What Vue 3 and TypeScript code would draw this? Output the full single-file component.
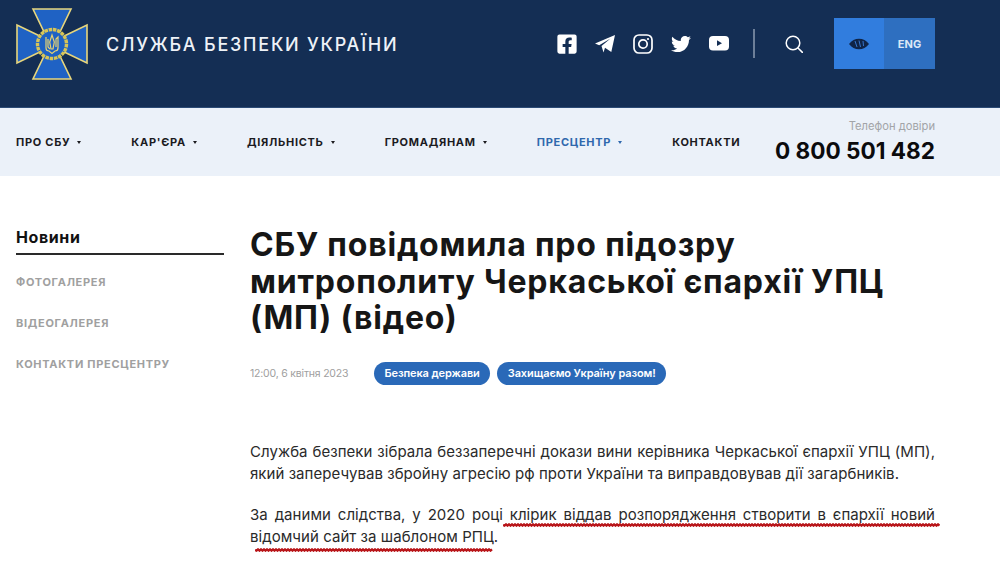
<script setup lang="ts">
import { computed } from 'vue'

interface NavItem {
  label: string
  arrow: boolean
  active?: boolean
}

const navItems: NavItem[] = [
  { label: 'Про СБУ', arrow: true },
  { label: "Кар'єра", arrow: true },
  { label: 'Діяльність', arrow: true },
  { label: 'Громадянам', arrow: true },
  { label: 'Пресцентр', arrow: true, active: true },
  { label: 'Контакти', arrow: false }
]

const sideLinks = ['Фотогалерея', 'Відеогалерея', 'Контакти пресцентру']
const tags = ['Безпека держави', 'Захищаємо Україну разом!']

/** хвиляста лінія для підкреслення */
function wave(width: number): string {
  let d = 'M0 2'
  for (let x = 1.5; x <= width; x += 1.5) {
    d += ` L${x} ${Math.round(x / 1.5) % 2 === 0 ? 1.4 : 2.6}`
  }
  return d
}

const waveLong = computed(() => wave(437))
const waveShort = computed(() => wave(238))
</script>

<template>
  <div class="page">
    <header class="top">
      <div class="brand">
        <svg class="emblem" viewBox="0 0 72 72" width="72" height="72">
          <g fill="#1f62c4" stroke="#e8d67c" stroke-width="1.6" stroke-linejoin="miter">
            <path d="M17 1 H55 L42 28 H30 Z" />
            <path d="M17 71 H55 L42 44 H30 Z" />
            <path d="M1 17 V55 L28 42 V30 Z" />
            <path d="M71 17 V55 L44 42 V30 Z" />
          </g>
          <circle cx="36" cy="36" r="14.5" fill="#1f62c4" stroke="#d8c556" stroke-width="3.4" stroke-dasharray="3.5 0.8" />
          <g fill="none" stroke="#e6d272" stroke-width="1.2">
            <path d="M36 27 L38.3 34 L37 41 H35 L33.7 34 Z" />
            <path d="M30 29 V40 Q30 43 33 43 L36 45.5 L39 43 Q42 43 42 40 V29 L40 31 V39" />
            <path d="M32 31 V39 L34 41" />
          </g>
        </svg>
        <span class="brand-name">Служба безпеки України</span>
      </div>
      <div class="top-right">
        <div class="socials">
          <svg viewBox="0 0 448 512" width="20" height="22" fill="#fff"><path d="M400 32H48A48 48 0 0 0 0 80v352a48 48 0 0 0 48 48h137.25V327.69h-63V256h63v-54.64c0-62.15 37-96.48 93.67-96.48 27.14 0 55.52 4.84 55.52 4.84v61h-31.27c-30.81 0-40.42 19.12-40.42 38.73V256h68.78l-11 71.69h-57.78V480H400a48 48 0 0 0 48-48V80a48 48 0 0 0-48-48z" /></svg>
          <svg viewBox="0 0 20 18" width="20" height="18" fill="#fff"><path d="M0 8.5 L20 0 L16.3 17 L10 12.8 L8.5 17.5 L6.5 11 L15.5 3.6 L4.2 10.3 Z" /></svg>
          <svg viewBox="0 0 20 20" width="20" height="20" fill="none" stroke="#fff" stroke-width="1.7"><rect x="1" y="1" width="18" height="18" rx="5" /><circle cx="10" cy="10" r="4.2" /><circle cx="15" cy="5" r="1.1" fill="#fff" stroke="none" /></svg>
          <svg viewBox="0 0 512 512" width="20" height="20" fill="#fff"><path d="M459.37 151.716c.325 4.548.325 9.097.325 13.645 0 138.72-105.583 298.558-298.558 298.558-59.452 0-114.68-17.219-161.137-47.106 8.447.974 16.568 1.299 25.34 1.299 49.055 0 94.213-16.568 130.274-44.832-46.132-.975-84.792-31.188-98.112-72.772 6.498.974 12.995 1.624 19.818 1.624 9.421 0 18.843-1.3 27.614-3.573-48.081-9.747-84.143-51.98-84.143-102.985v-1.299c13.969 7.797 30.214 12.67 47.431 13.319-28.264-18.843-46.781-51.005-46.781-87.391 0-19.492 5.197-37.36 14.294-52.954 51.655 63.675 129.3 105.258 216.365 109.807-1.624-7.797-2.599-15.918-2.599-24.04 0-57.828 46.782-104.934 104.934-104.934 30.213 0 57.502 12.67 76.67 33.137 23.715-4.548 46.456-13.32 66.599-25.34-7.798 24.366-24.366 44.833-46.132 57.827 21.117-2.273 41.584-8.122 60.426-16.243-14.292 20.791-32.161 39.308-52.628 54.253z" /></svg>
          <svg viewBox="0 0 20 15" width="20" height="15"><rect width="20" height="14.5" rx="4" fill="#fff" /><path d="M8 4.3 L13 7.2 L8 10.1 Z" fill="#142e54" /></svg>
        </div>
        <span class="divider"></span>
        <svg class="search" viewBox="0 0 18 18" width="18" height="18" fill="none" stroke="#fff" stroke-width="1.5"><circle cx="8" cy="8" r="6.8" /><path d="M13 13 L17.4 17.4" stroke-linecap="round" /></svg>
        <div class="access">
          <span class="access-eye">
            <svg viewBox="0 0 20 12" width="20" height="12">
              <path d="M0 6 C5 -1 15 -1 20 6 C15 13 5 13 0 6 Z" fill="#0f2447" />
              <path d="M6 3 L8 9 M10 2.5 L11.5 9 M14 3 L14.5 8" stroke="#3a7edb" stroke-width="0.9" />
            </svg>
          </span>
          <span class="access-lang">ENG</span>
        </div>
      </div>
    </header>

    <nav class="nav">
      <div class="nav-list">
        <a v-for="item in navItems" :key="item.label" class="nav-item" :class="{ active: item.active }">
          {{ item.label }}
          <i v-if="item.arrow" class="nav-arrow"></i>
        </a>
      </div>
      <div class="phone">
        <span class="phone-label">Телефон довіри</span>
        <span class="phone-number">0 800 501 482</span>
      </div>
    </nav>

    <main class="content">
      <aside class="side">
        <div class="side-title">Новини</div>
        <a v-for="link in sideLinks" :key="link" class="side-link">{{ link }}</a>
      </aside>
      <article class="article">
        <h1 class="title">СБУ повідомила про підозру митрополиту Черкаської єпархії УПЦ (МП) (відео)</h1>
        <div class="meta">
          <span class="date">12:00, 6 квітня 2023</span>
          <span v-for="tag in tags" :key="tag" class="tag">{{ tag }}</span>
        </div>
        <p class="para">Служба безпеки зібрала беззаперечні докази вини керівника Черкаської єпархії УПЦ (МП), який заперечував збройну агресію рф проти України та виправдовував дії загарбників.</p>
        <p class="para marked">
          За даними слідства, у 2020 році клірик віддав розпорядження створити в єпархії новий відомчий сайт за шаблоном РПЦ.
          <svg class="mark mark-long" width="437" height="4"><path :d="waveLong" /></svg>
          <svg class="mark mark-short" width="238" height="4"><path :d="waveShort" /></svg>
        </p>
      </article>
    </main>
  </div>
</template>

<style>
html,
body {
  margin: 0;
  background: #fff;
}
</style>

<style scoped>
.page {
  width: 1000px;
  height: 567px;
  overflow: hidden;
  font-family: Inter, "Noto Sans", sans-serif;
  color: #111;
}

.top {
  height: 108px;
  box-sizing: border-box;
  padding: 8px 65px 0 16px;
  background: #142e54;
  border-bottom: 1px solid #2c4b76;
  display: flex;
  justify-content: space-between;
  align-items: flex-start;
}

.brand {
  display: flex;
  align-items: center;
  gap: 18px;
}

.emblem {
  display: block;
}

.brand-name {
  font-size: 18px;
  font-weight: 500;
  letter-spacing: 1.78px;
  text-transform: uppercase;
  color: #eef2f7;
}

.top-right {
  display: flex;
  align-items: center;
  margin-top: 10px;
  height: 51px;
}

.socials {
  display: flex;
  align-items: center;
  gap: 18px;
}

.divider {
  width: 2px;
  height: 29px;
  margin-left: 24px;
  background: #6d7f99;
}

.search {
  margin-left: 30px;
}

.access {
  display: flex;
  margin-left: 31px;
  height: 51px;
}

.access-eye,
.access-lang {
  width: 51px;
  display: flex;
  align-items: center;
  justify-content: center;
}

.access-eye {
  width: 50px;
  background: #317dde;
}

.access-lang {
  background: #2e6fc0;
  color: #dbe7f6;
  font-size: 11px;
  font-weight: 700;
}

.nav {
  height: 68px;
  box-sizing: border-box;
  padding: 0 65px 0 16px;
  background: #ebf1f9;
  display: flex;
  align-items: center;
  justify-content: space-between;
}

.nav-list {
  display: flex;
  align-items: center;
  gap: 50px;
}

.nav-item {
  display: flex;
  align-items: center;
  gap: 7px;
  flex: none;
  white-space: nowrap;
  font-size: 11px;
  font-weight: 700;
  letter-spacing: 0.72px;
  text-transform: uppercase;
  color: #1b1b1f;
}

.nav-item.active {
  color: #2f68ad;
}

.nav-arrow {
  width: 0;
  height: 0;
  border-left: 2.5px solid transparent;
  border-right: 2.5px solid transparent;
  border-top: 3px solid currentColor;
}

.phone {
  display: flex;
  flex-direction: column;
  align-items: flex-end;
  gap: 4px;
  padding-bottom: 2px;
  white-space: nowrap;
}

.phone-label {
  font-size: 11.2px;
  line-height: 14px;
  color: #a2a4a8;
}

.phone-number {
  font-size: 22.6px;
  line-height: 27px;
  font-weight: 700;
  color: #0b0b0d;
}

.content {
  display: flex;
  gap: 26px;
  padding: 0 65px 0 16px;
}

.side {
  width: 208px;
  flex: none;
  padding-top: 52px;
  display: flex;
  flex-direction: column;
}

.side-title {
  font-size: 16px;
  font-weight: 700;
  letter-spacing: 0.6px;
  line-height: 18px;
  padding-bottom: 7px;
  border-bottom: 2px solid #2a2a2a;
  margin-bottom: 20px;
}

.side-link {
  font-size: 11px;
  font-weight: 700;
  line-height: 14px;
  letter-spacing: 0.7px;
  text-transform: uppercase;
  color: #a0a0a0;
  margin-bottom: 27px;
}

.article {
  flex: 1;
  padding-top: 51px;
}

.title {
  margin: 0;
  max-width: 650px;
  font-size: 32px;
  font-weight: 700;
  letter-spacing: 0.8px;
  line-height: 36.5px;
  color: #161616;
}

.meta {
  display: flex;
  align-items: center;
  margin-top: 25px;
}

.date {
  font-size: 10.5px;
  letter-spacing: -0.2px;
  color: #a0a0a0;
  width: 124px;
}

.tag {
  height: 23px;
  line-height: 23px;
  padding: 0 10.5px;
  margin-right: 7px;
  border-radius: 12px;
  background: #2a69b8;
  color: #fff;
  font-size: 11px;
  font-weight: 600;
  letter-spacing: -0.1px;
}

.para {
  margin: 0 0 18px;
  font-size: 15px;
  line-height: 22.5px;
  text-align: justify;
  letter-spacing: 0.05px;
  color: #2a2a2a;
}

.meta + .para {
  margin-top: 56px;
}

.marked {
  position: relative;
}

.mark {
  position: absolute;
  fill: none;
  stroke: #b9161a;
  stroke-width: 2.4;
}

.mark-long {
  left: 253px;
  top: 19px;
}

.mark-short {
  left: 5px;
  top: 44px;
}
</style>
